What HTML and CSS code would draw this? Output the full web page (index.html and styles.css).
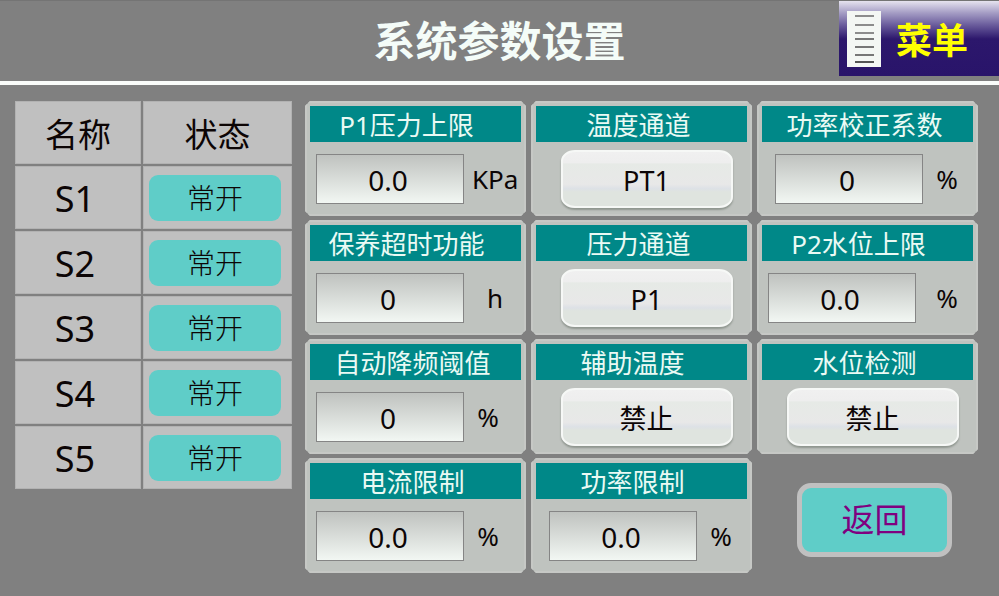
FILE: index.html
```html
<!DOCTYPE html>
<html lang="zh-CN">

<head>
    <meta charset="UTF-8">
    <meta name="viewport" content="width=device-width, initial-scale=1.0">
    <title>系统参数设置</title>
    <link rel="stylesheet" href="styles.css">
</head>

<body>
    <header class="header">
        <h1>系统参数设置</h1>
        <button type="button" class="menu-btn">
            <svg width="36" height="56" viewBox="0 0 36 56" aria-hidden="true">
                <rect x="1" y="0" width="34" height="56" fill="#f4f7f4" />
                <g stroke="#8c8c8c" stroke-width="2">
                    <path d="M9 5h19M9 14h19M9 22h19" />
                    <path d="M9 28h19M9 36h19M9 44h19" stroke="#777" />
                    <path d="M9 51h19" stroke="#555" />
                </g>
            </svg>
            <span>菜单</span>
        </button>
    </header>

    <main class="main">
        <table class="status-table">
            <thead>
                <tr>
                    <th scope="col">名称</th>
                    <th scope="col">状态</th>
                </tr>
            </thead>
            <tbody>
                <tr>
                    <td>S1</td>
                    <td><button type="button" class="state-btn">常开</button></td>
                </tr>
                <tr>
                    <td>S2</td>
                    <td><button type="button" class="state-btn">常开</button></td>
                </tr>
                <tr>
                    <td>S3</td>
                    <td><button type="button" class="state-btn">常开</button></td>
                </tr>
                <tr>
                    <td>S4</td>
                    <td><button type="button" class="state-btn">常开</button></td>
                </tr>
                <tr>
                    <td>S5</td>
                    <td><button type="button" class="state-btn">常开</button></td>
                </tr>
            </tbody>
        </table>

        <form class="params">
            <div class="card">
                <label class="card-title shifted" for="p1Limit">P1压力上限</label>
                <div class="field">
                    <input type="text" id="p1Limit" value="0.0">
                    <span class="unit">KPa</span>
                </div>
            </div>
            <div class="card">
                <label class="card-title" for="tempChannel">温度通道</label>
                <div class="option">
                    <button type="button" id="tempChannel" class="option-btn">PT1</button>
                </div>
            </div>
            <div class="card">
                <label class="card-title" for="powerFactor">功率校正系数</label>
                <div class="field indent">
                    <input type="text" id="powerFactor" value="0">
                    <span class="unit percent">%</span>
                </div>
            </div>

            <div class="card">
                <label class="card-title shifted" for="maintain">保养超时功能</label>
                <div class="field">
                    <input type="text" id="maintain" value="0">
                    <span class="unit">h</span>
                </div>
            </div>
            <div class="card">
                <label class="card-title" for="pressChannel">压力通道</label>
                <div class="option">
                    <button type="button" id="pressChannel" class="option-btn">P1</button>
                </div>
            </div>
            <div class="card">
                <label class="card-title shifted" for="p2Limit">P2水位上限</label>
                <div class="field">
                    <input type="text" id="p2Limit" value="0.0">
                    <span class="unit">%</span>
                </div>
            </div>

            <div class="card">
                <label class="card-title" for="autoFreq">自动降频阈值</label>
                <div class="field">
                    <input type="text" id="autoFreq" value="0">
                    <span class="unit percent">%</span>
                </div>
            </div>
            <div class="card">
                <label class="card-title shifted" for="auxTemp">辅助温度</label>
                <div class="option">
                    <button type="button" id="auxTemp" class="option-btn">禁止</button>
                </div>
            </div>
            <div class="card">
                <label class="card-title" for="waterCheck">水位检测</label>
                <div class="option">
                    <button type="button" id="waterCheck" class="option-btn">禁止</button>
                </div>
            </div>

            <div class="card">
                <label class="card-title" for="currentLimit">电流限制</label>
                <div class="field">
                    <input type="text" id="currentLimit" value="0.0">
                    <span class="unit percent">%</span>
                </div>
            </div>
            <div class="card">
                <label class="card-title shifted" for="powerLimit">功率限制</label>
                <div class="field indent">
                    <input type="text" id="powerLimit" value="0.0">
                    <span class="unit percent">%</span>
                </div>
            </div>
            <div class="back">
                <button type="button" class="back-btn">返回</button>
            </div>
        </form>
    </main>
</body>

</html>
```
FILE: styles.css
```css
* {
    box-sizing: border-box;
}

body {
    margin: 0;
    background-color: #808080;
    color: #0c0505;
    font-family: "Noto Sans", "Noto Sans CJK SC", sans-serif;
}

button,
input {
    font-family: inherit;
    color: inherit;
    margin: 0;
}

button {
    padding: 0;
    cursor: pointer;
}

/* header */
.header {
    display: grid;
    grid-template-columns: 160px 1fr 160px;
    height: 85px;
    border-top: 1px solid #747474;
    border-bottom: 4px solid #fafcfa;
}

.header h1 {
    grid-column: 2;
    margin: 0;
    text-align: center;
    font-size: 42px;
    line-height: 80px;
    font-weight: bold;
    color: #f4fcf8;
}

.menu-btn {
    display: flex;
    align-items: center;
    gap: 14px;
    height: 75px;
    padding-left: 7px;
    border: none;
    background: linear-gradient(#e6e3ef 0, #a49cc4 12px, #6a5c9c 24px, #2c176c 38px, #29146a 100%);
    color: #ffff00;
    font-size: 36px;
    line-height: 40px;
    font-weight: bold;
}

.menu-btn span {
    padding-top: 4px;
}

/* content */
.main {
    display: grid;
    grid-template-columns: 277fr 673fr;
    gap: 13px;
    align-items: start;
    padding: 16px 21px 24px 15px;
}

.status-table {
    width: calc(100% + 4px);
    margin: -2px;
    table-layout: fixed;
    border-collapse: separate;
    border-spacing: 2px;
}

.status-table th,
.status-table td {
    height: 63px;
    padding: 0;
    border: 1px solid #b2b2b2;
    background-color: #c0c0c0;
    text-align: center;
    font-size: 36px;
    line-height: 48px;
    font-weight: normal;
}

.status-table th {
    padding-top: 4px;
    font-size: 33px;
}

.status-table th:first-child {
    width: 126px;
}

.status-table td:first-child {
    padding: 2px 6px 0 0;
}

.status-table td:last-child {
    padding: 0 10px 0 5px;
}

.state-btn {
    display: block;
    width: 100%;
    height: 46px;
    border: none;
    border-radius: 9px;
    background-color: #5fcdc8;
    font-size: 28px;
    line-height: 42px;
    font-weight: 300;
}

/* parameter cards */
.params {
    display: grid;
    grid-template-columns: repeat(3, 1fr);
    gap: 4px 5px;
}

.card {
    height: 115px;
    padding: 3px;
    border: 2px solid #c6c8c5;
    background-color: #bfc3bf;
    clip-path: polygon(5px 0, calc(100% - 5px) 0, 100% 5px, 100% calc(100% - 5px), calc(100% - 5px) 100%, 5px 100%, 0 calc(100% - 5px), 0 5px);
}

.card-title {
    display: block;
    height: 36px;
    padding-right: 6px;
    background-color: #008888;
    color: #eafaf4;
    text-align: center;
    font-size: 26px;
    line-height: 38px;
    white-space: nowrap;
}

.card-title.shifted {
    padding-right: 18px;
}

.field {
    display: flex;
    align-items: center;
    gap: 8px;
    padding: 12px 0 0 6px;
}

.field.indent {
    padding-left: 13px;
}

.field input {
    flex: 0 1 148px;
    min-width: 0;
    height: 50px;
    padding: 2px 4px 0 0;
    border: 1px solid #858585;
    border-radius: 0;
    background: linear-gradient(#bfc2bf, #f2f7f3);
    text-align: center;
    font-size: 28px;
}

.unit {
    width: 46px;
    text-align: center;
    font-size: 26px;
    line-height: 36px;
}

.unit.percent {
    width: 32px;
}

.option {
    display: flex;
    justify-content: center;
    padding: 8px 0 0 10px;
}

.option-btn {
    width: 172px;
    height: 58px;
    padding-top: 4px;
    border: 2px solid #f6f8f6;
    border-radius: 14px / 11px;
    background: linear-gradient(#f0f0f0 0, #eeeeee 20%, #e6eae6 22%, #e8e8e8 60%, #dde1e6 68%, #dfe4df 74%, #dfe4df 100%);
    box-shadow: 0 2px 2px #8f968f;
    font-size: 27px;
    line-height: 50px;
}

.back {
    display: flex;
    justify-content: center;
    align-items: center;
    padding: 8px 0 0 14px;
}

.back-btn {
    width: 155px;
    height: 74px;
    border: 5px solid #c0c0c0;
    border-radius: 14px;
    background-color: #5fcdc8;
    color: #800080;
    font-size: 33px;
    line-height: 60px;
}
```
